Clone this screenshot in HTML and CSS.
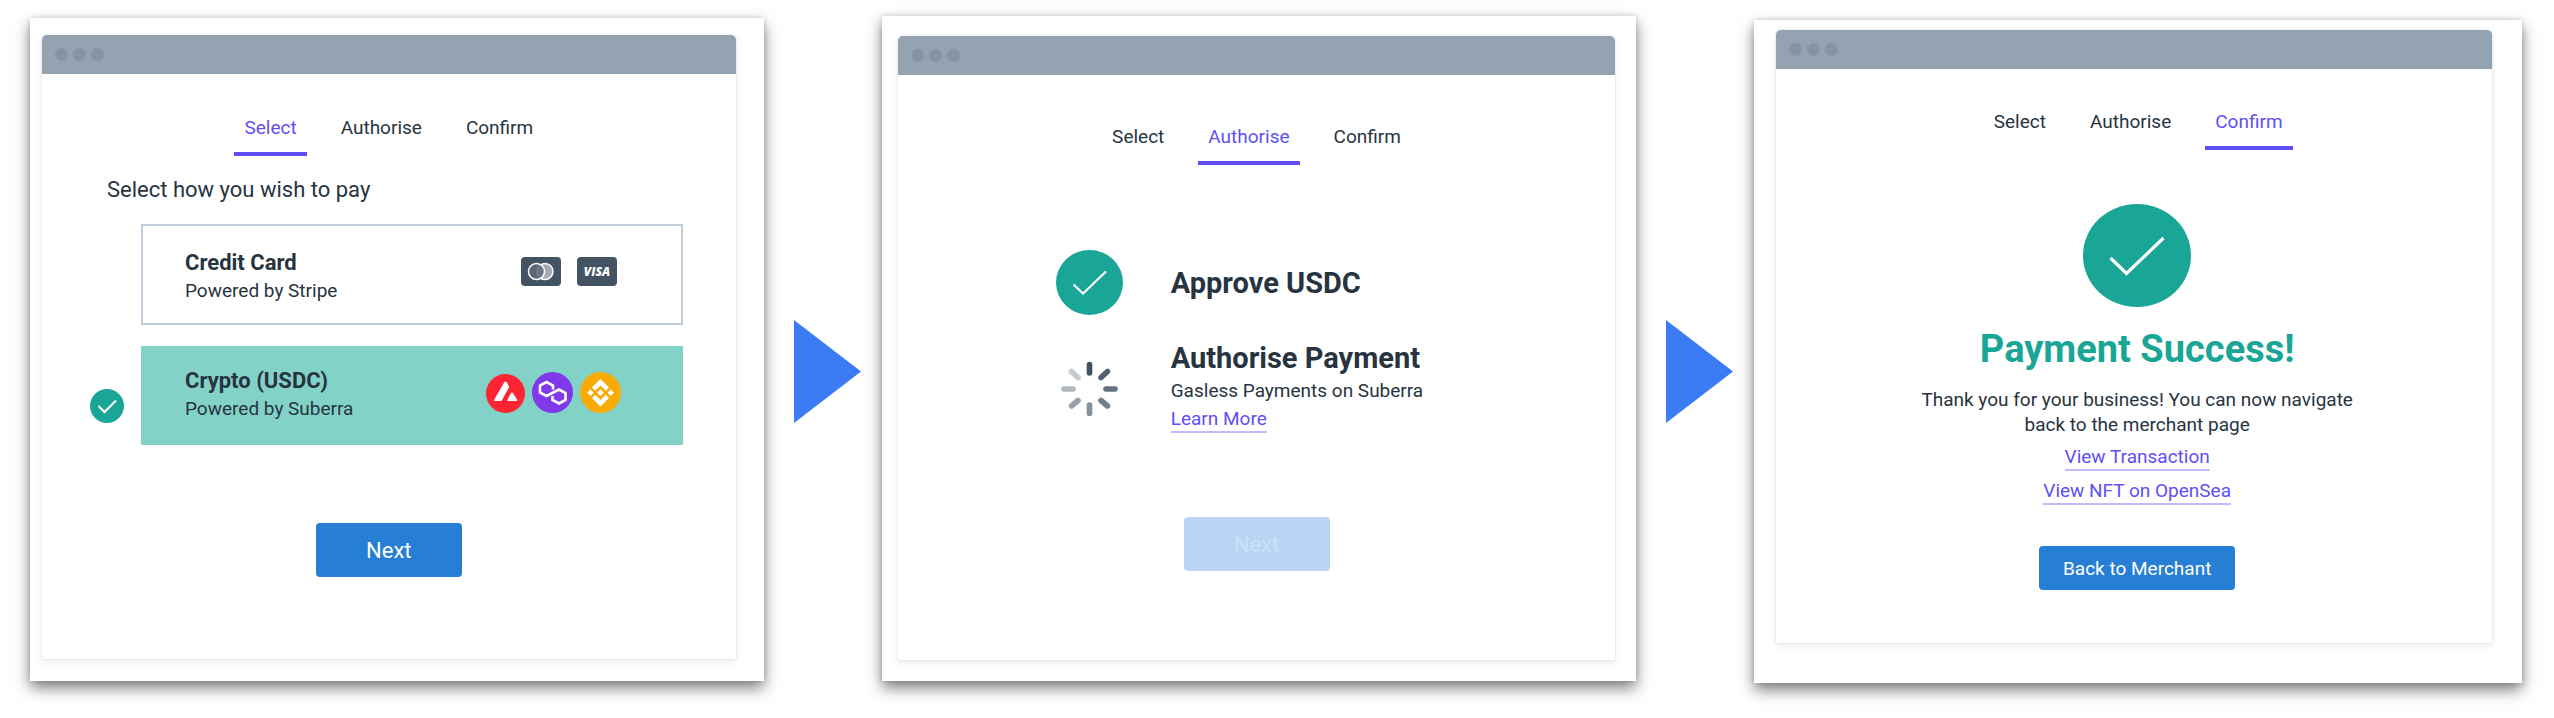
FILE: index.html
```html
<!DOCTYPE html>
<html lang="en">
<head>
<meta charset="utf-8">
<title>Checkout flow</title>
<link rel="stylesheet" href="styles.css">
</head>
<body>
<main class="flow">
  <section class="panel panel-select">
    <div class="window">
      <div class="titlebar"><span class="dot"></span><span class="dot"></span><span class="dot"></span></div>
      <nav class="tabs">
        <a class="tab active" href="#select">Select</a>
        <a class="tab" href="#authorise">Authorise</a>
        <a class="tab" href="#confirm">Confirm</a>
      </nav>
      <form class="pay-form">
        <h2 class="prompt">Select how you wish to pay</h2>
        <label class="option">
          <span class="marker"><input class="radio" type="radio" name="method"></span>
          <span class="card">
            <span class="card-text"><strong class="card-title">Credit Card</strong><span class="text">Powered by Stripe</span></span>
            <span class="brands">
              <svg width="40" height="29" viewBox="0 0 40 29"><rect width="40" height="29" rx="4" fill="#435363"/><circle cx="24" cy="14.500" r="8" fill="#a3abb4" stroke="#fff" stroke-width="1.500"/><circle cx="15.500" cy="14.500" r="8" fill="#5d6b79" fill-opacity=".85" stroke="#fff" stroke-width="1.500"/></svg>
              <svg width="40" height="29" viewBox="0 0 40 29"><rect width="40" height="29" rx="4" fill="#435363"/><text class="visa" x="20" y="19" text-anchor="middle">VISA</text></svg>
            </span>
          </span>
        </label>
        <label class="option">
          <span class="marker"><input class="radio" type="radio" name="method" checked><svg class="tick" viewBox="0 0 34 34"><circle cx="17" cy="17" r="17" fill="#1aa696"/><path d="M8.500 17l6 6L26 11.500" fill="none" stroke="#fff" stroke-width="2"/></svg></span>
          <span class="card chosen">
            <span class="card-text"><strong class="card-title">Crypto (USDC)</strong><span class="text">Powered by Suberra</span></span>
            <span class="coins">
              <svg width="39" height="39" viewBox="0 0 39 39"><circle cx="19.500" cy="19.500" r="19.500" fill="#ff2433"/><path d="M19.500 7.500Q20.500 7.500 21.500 9.500L23.200 13 15.500 27H8.500Q7.500 27 8.500 25.200L17.500 9.500Q18.500 7.500 19.500 7.500ZM26 18.500Q26.600 18.500 27.200 19.500L31 25.500Q31.800 27 30.500 27H22Q20.800 27 21.500 25.500L24.800 19.500Q25.400 18.500 26 18.500Z" fill="#fff"/></svg>
              <svg width="41" height="41" viewBox="0 0 41 41"><circle cx="20.500" cy="20.500" r="20.500" fill="#8039ea"/><path d="M21 17.500V13.500L14.500 10 8 13.500V20.500L14.500 24 27 17.500 33.500 21V28L27 31.500 20.500 28V24" fill="none" stroke="#fff" stroke-width="2.600"/></svg>
              <svg width="41" height="41" viewBox="0 0 41 41"><circle cx="20.500" cy="20.500" r="20.500" fill="#f9ab05"/><path d="M20.500 7l8.500 8.500-3.200 3.200-5.300-5.300-5.300 5.300-3.200-3.200ZM20.500 34.500l8.500-8.500-3.200-3.200-5.300 5.300-5.300-5.300-3.200 3.200ZM10.500 17.500l3.200 3.200-3.200 3.200-3.200-3.200ZM30.800 17.500l3.200 3.200-3.200 3.200-3.200-3.200ZM20.500 17.300l3.400 3.400-3.400 3.400-3.400-3.400Z" fill="#fff"/></svg>
            </span>
          </span>
        </label>
        <button class="button next" type="button">Next</button>
      </form>
    </div>
  </section>

  <svg class="arrow" viewBox="0 0 67 103" preserveAspectRatio="none"><path d="M0 0L67 51.500 0 103Z" fill="#3b7cf5"/></svg>

  <section class="panel panel-authorise">
    <div class="window">
      <div class="titlebar"><span class="dot"></span><span class="dot"></span><span class="dot"></span></div>
      <nav class="tabs">
        <a class="tab" href="#select">Select</a>
        <a class="tab active" href="#authorise">Authorise</a>
        <a class="tab" href="#confirm">Confirm</a>
      </nav>
      <div class="steps">
        <svg width="67" height="65" viewBox="0 0 67 65"><ellipse cx="33.500" cy="32.500" rx="33.500" ry="32.500" fill="#1aa696"/><path d="M17.500 34.500L27 43.500 50 21.500" fill="none" stroke="#fff" stroke-width="2.200"/></svg>
        <h2 class="step-title">Approve USDC</h2>
        <svg width="67" height="56" viewBox="-33.500 -28 67 56" fill="none" stroke="#435363" stroke-width="5.600" stroke-linecap="round">
          <path d="M0-24.500V-16"/>
          <path d="M11.500-11.500L18-17.500" opacity=".92"/>
          <path d="M16.500 0H25.500" opacity=".82"/>
          <path d="M11.500 11.500L18 17" opacity=".74"/>
          <path d="M0 16V24.500" opacity=".64"/>
          <path d="M-11.500 11.500L-18 17" opacity=".54"/>
          <path d="M-16.500 0H-25.500" opacity=".42"/>
          <path d="M-11.500-11.500L-18-17.500" opacity=".3"/>
        </svg>
        <div class="step-body">
          <h2 class="step-title">Authorise Payment</h2>
          <p class="text">Gasless Payments on Suberra</p>
          <a class="link" href="#learn">Learn More</a>
        </div>
      </div>
      <button class="button next" type="button" disabled>Next</button>
    </div>
  </section>

  <svg class="arrow" viewBox="0 0 67 103" preserveAspectRatio="none"><path d="M0 0L67 51.500 0 103Z" fill="#3b7cf5"/></svg>

  <section class="panel panel-confirm">
    <div class="window">
      <div class="titlebar"><span class="dot"></span><span class="dot"></span><span class="dot"></span></div>
      <nav class="tabs">
        <a class="tab" href="#select">Select</a>
        <a class="tab" href="#authorise">Authorise</a>
        <a class="tab active" href="#confirm">Confirm</a>
      </nav>
      <div class="result">
        <svg width="108" height="103" viewBox="0 0 108 103"><ellipse cx="54" cy="51.500" rx="54" ry="51.500" fill="#1aa696"/><path d="M27.500 54L43.500 69.500 80.500 34" fill="none" stroke="#fff" stroke-width="3.200"/></svg>
        <h1 class="success">Payment Success!</h1>
        <p class="message">Thank you for your business! You can now navigate<br>back to the merchant page</p>
        <a class="link" href="#transaction">View Transaction</a>
        <a class="link" href="#nft">View NFT on OpenSea</a>
        <button class="button back" type="button">Back to Merchant</button>
      </div>
    </div>
  </section>
</main>
</body>
</html>
```

FILE: styles.css
```css
* {
  box-sizing: border-box;
}

body {
  margin: 0;
  background: #fff;
  color: #27343f;
  font-family: Roboto, "Liberation Sans", sans-serif;
  font-size: 19px;
  font-weight: 400;
  line-height: 26px;
}

h1,
h2,
p {
  margin: 0;
}

svg {
  display: block;
  flex: none;
}

.flow {
  display: grid;
  grid-template-columns: 734fr 118px 755fr 118px 768fr;
  align-items: start;
  padding: 16px 32px 32px 30px;
}

.panel {
  background: #fff;
  box-shadow: 0 7px 14px rgba(0, 0, 0, .5), 0 0 5px rgba(0, 0, 0, .14);
}

.panel-select {
  margin-top: 2px;
  padding: 17px 28px 22px 12px;
}

.panel-authorise {
  padding: 20px 21px 21px 16px;
}

.panel-confirm {
  margin-top: 4px;
  padding: 10px 30px 40px 22px;
}

.arrow {
  width: 67px;
  height: 103px;
  margin: 304px 21px 0 30px;
}

.window {
  display: flex;
  flex-direction: column;
  border-radius: 5px 5px 0 0;
  box-shadow: 0 3px 8px rgba(0, 0, 0, .08), 0 0 2px rgba(0, 0, 0, .14);
}

.titlebar {
  display: flex;
  align-items: center;
  gap: 5px;
  height: 39px;
  padding-left: 13px;
  background: #94a3b2;
  border-radius: 5px 5px 0 0;
}

.dot {
  width: 13px;
  height: 13px;
  border-radius: 50%;
  background: #8494a3;
}

.tabs {
  display: flex;
  justify-content: center;
  gap: 24px;
  padding-top: 42px;
}

.panel-authorise .tabs {
  padding-top: 50px;
}

.panel-confirm .tabs {
  padding: 41px 0 0 8px;
}

.tab {
  padding: 0 10px 12px;
  border-bottom: 4px solid transparent;
  color: inherit;
  line-height: 24px;
  text-decoration: none;
}

.tab.active {
  border-color: #604ff5;
  color: #604ff5;
}

.pay-form {
  display: flex;
  flex-direction: column;
  padding: 20px 53px 82px 48px;
}

.prompt {
  margin-bottom: 20px;
  padding-left: 17px;
  font-size: 22px;
  font-weight: 400;
  line-height: 28px;
}

.option {
  display: flex;
  align-items: flex-end;
  gap: 17px;
  margin-bottom: 21px;
}

.marker {
  display: grid;
  width: 34px;
  height: 34px;
  margin-bottom: 22px;
}

.radio {
  grid-area: 1 / 1;
  width: 34px;
  height: 34px;
  margin: 0;
  appearance: none;
}

.tick {
  grid-area: 1 / 1;
}

.card {
  display: flex;
  flex: 1;
  justify-content: space-between;
  align-items: center;
  padding: 24px 64px 19px 42px;
  border: 2px solid #bfccd9;
}

.card.chosen {
  padding: 22px 62px 23px 44px;
  border: 0;
  background: #83d2c8;
}

.card-text {
  display: flex;
  flex-direction: column;
  gap: 2px;
}

.card-title {
  font-size: 22px;
  font-weight: 700;
}

.brands {
  display: flex;
  gap: 16px;
  padding-bottom: 12px;
}

.coins {
  display: flex;
  align-items: flex-end;
  gap: 7px;
  padding-bottom: 6px;
}

.visa {
  fill: #fff;
  font-family: "Open Sans", sans-serif;
  font-size: 12px;
  font-style: italic;
  font-weight: 800;
}

.button {
  align-self: center;
  border: 0;
  border-radius: 4px;
  background: #267ed5;
  color: #fff;
  font-family: inherit;
  font-weight: 400;
}

.next {
  width: 146px;
  height: 54px;
  font-size: 22px;
}

.pay-form .next {
  margin: 57px 0 0 5px;
}

.panel-authorise .next {
  margin: 80px 0 89px;
}

.next:disabled {
  background: #b8d6f3;
  color: #cbe1f6;
}

.steps {
  display: grid;
  grid-template-columns: 67px 1fr;
  align-items: center;
  gap: 26px 48px;
  padding: 85px 20px 0 158px;
}

.step-title {
  font-size: 29px;
  font-weight: 700;
  line-height: 34px;
}

.step-body {
  display: flex;
  flex-direction: column;
  align-items: flex-start;
  gap: 3px;
  padding-bottom: 4px;
}

.link {
  border-bottom: 2px solid #c3bbfb;
  color: #604ff5;
  line-height: 24px;
  text-decoration: none;
}

.result {
  display: flex;
  flex-direction: column;
  align-items: center;
  padding: 54px 0 53px 6px;
}

.success {
  margin: 20px 0 16px;
  color: #1aa696;
  font-size: 38px;
  font-weight: 700;
  line-height: 44px;
}

.message {
  line-height: 25px;
  text-align: center;
}

.result .link {
  margin-top: 8px;
}

.back {
  height: 44px;
  margin-top: 41px;
  padding: 0 24px;
  font-size: 19px;
}
```
